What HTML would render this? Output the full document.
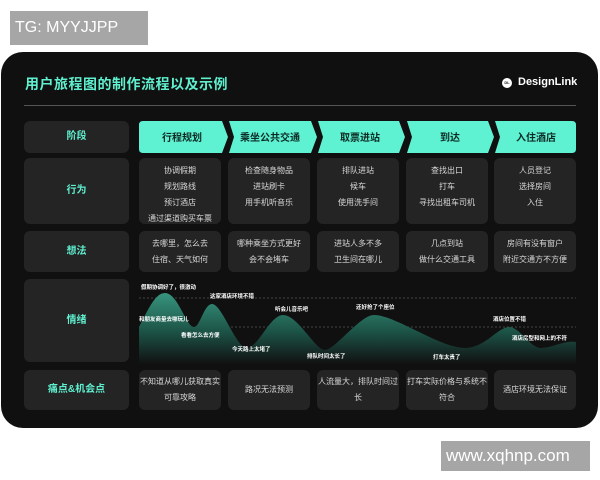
<!DOCTYPE html>
<html><head><meta charset="utf-8"><style>
*{margin:0;padding:0;box-sizing:border-box}
body{width:600px;height:480px;background:#fff;position:relative;overflow:hidden;font-family:"Liberation Sans","Noto Sans CJK SC",sans-serif}
.tag{position:absolute;background:#a6a6a6;color:#fff;font-size:16px;display:flex;align-items:center;padding-left:5px}
.card{position:absolute;left:1px;top:52px;width:597px;height:376px;background:#101010;border-radius:22px}
.t{position:absolute;color:#5ff0cf;font-weight:bold}
.c{position:absolute;background:#242424;border-radius:6px;color:#d8d8d8;font-size:8px;display:flex;flex-direction:column;align-items:center;justify-content:center;text-align:center;line-height:16px}
.h{color:#5ff0cf;font-size:10px;font-weight:bold}
.tp{justify-content:flex-start;padding-top:5px}
svg{position:absolute;left:0;top:0}
.lb{font-size:5.5px;fill:#fff;font-weight:bold;font-family:"Liberation Sans","Noto Sans CJK SC",sans-serif}
</style></head><body>
<div class="tag" style="left:10px;top:11px;width:138px;height:34px">TG: MYYJJPP</div>
<div class="tag" style="left:441px;top:441px;width:149px;height:30px;font-size:17px">www.xqhnp.com</div>
<div class="card"></div>
<div class="t" style="left:25px;top:74px;font-size:14px;letter-spacing:0.5px">用户旅程图的制作流程以及示例</div>
<div style="position:absolute;left:502px;top:78px;width:10px;height:10px;border-radius:50%;background:#fff;color:#111;font-size:4px;font-weight:bold;text-align:center;line-height:10px">DL</div>
<div style="position:absolute;left:518px;top:76px;color:#fff;font-size:11px;font-weight:bold">DesignLink</div>
<div style="position:absolute;left:24px;top:105px;width:552px;height:1px;background:#555"></div>

<div class="c h" style="left:24px;top:121px;width:105px;height:32px">阶段</div>
<div class="c h" style="left:24px;top:158px;width:105px;height:66px">行为</div>
<div class="c h" style="left:24px;top:231px;width:105px;height:41px">想法</div>
<div class="c h" style="left:24px;top:279px;width:105px;height:83px">情绪</div>
<div class="c h" style="left:24px;top:370px;width:105px;height:40px">痛点&amp;机会点</div>

<svg width="600" height="480">
<g fill="#5ef2d2">
<path d="M143 121H222L228 137L222 153H143Q139 153 139 149V125Q139 121 143 121Z"/>
<path d="M229 121H311L317 137L311 153H229L234 137Z"/>
<path d="M318 121H399L405 137L399 153H318L323 137Z"/>
<path d="M407 121H488L494 137L488 153H407L412 137Z"/>
<path d="M495 121H572Q576 121 576 125V149Q576 153 572 153H495L500 137Z"/>
</g>
<g font-size="10" font-weight="bold" fill="#0d2a24" text-anchor="middle" font-family="Liberation Sans,Noto Sans CJK SC,sans-serif">
<text x="182" y="141">行程规划</text><text x="270" y="141">乘坐公共交通</text><text x="360" y="141">取票进站</text><text x="450" y="141">到达</text><text x="536" y="141">入住酒店</text>
</g>
</svg>

<div class="c tp" style="left:139px;top:158px;width:82px;height:66px">协调假期<br>规划路线<br>预订酒店<br>通过渠道购买车票</div>
<div class="c tp" style="left:228px;top:158px;width:82px;height:66px">检查随身物品<br>进站刷卡<br>用手机听音乐</div>
<div class="c tp" style="left:317px;top:158px;width:82px;height:66px">排队进站<br>候车<br>使用洗手间</div>
<div class="c tp" style="left:406px;top:158px;width:82px;height:66px">查找出口<br>打车<br>寻找出租车司机</div>
<div class="c tp" style="left:494px;top:158px;width:82px;height:66px">人员登记<br>选择房间<br>入住</div>

<div class="c" style="left:139px;top:231px;width:82px;height:41px">去哪里，怎么去<br>住宿、天气如何</div>
<div class="c" style="left:228px;top:231px;width:82px;height:41px">哪种乘坐方式更好<br>会不会堵车</div>
<div class="c" style="left:317px;top:231px;width:82px;height:41px">进站人多不多<br>卫生间在哪儿</div>
<div class="c" style="left:406px;top:231px;width:82px;height:41px">几点到站<br>做什么交通工具</div>
<div class="c" style="left:494px;top:231px;width:82px;height:41px">房间有没有窗户<br>附近交通方不方便</div>

<div class="c" style="left:139px;top:370px;width:82px;height:40px">不知道从哪儿获取真实<br>可靠攻略</div>
<div class="c" style="left:228px;top:370px;width:82px;height:40px">路况无法预测</div>
<div class="c" style="left:317px;top:370px;width:82px;height:40px">人流量大，排队时间过<br>长</div>
<div class="c" style="left:406px;top:370px;width:82px;height:40px">打车实际价格与系统不<br>符合</div>
<div class="c" style="left:494px;top:370px;width:82px;height:40px">酒店环境无法保证</div>

<svg width="600" height="480">
<defs><linearGradient id="g" x1="0" y1="0" x2="0" y2="1">
<stop offset="0" stop-color="#37957e"/><stop offset="0.55" stop-color="#1c5246"/><stop offset="1" stop-color="#111"/></linearGradient></defs>
<line x1="139" y1="298" x2="576" y2="298" stroke="#555" stroke-dasharray="2 2" stroke-width="0.7"/>
<line x1="139" y1="327" x2="576" y2="327" stroke="#555" stroke-dasharray="2 2" stroke-width="0.7"/>
<path fill="url(#g)" d="M139 327C148 310 155 293 165 293C178 293 186 327 194 327C200 327 204 304 212 304C222 304 236 348 247 348C258 348 270 315 283 315C298 315 315 350 325 350C335 350 360 315 374 315C395 315 440 348 465 348C485 348 498 327 509 327C520 327 530 348 541 348C552 348 565 340 576 342V364H139Z"/>
<text class="lb" x="141" y="289">假期协调好了，很激动</text>
<text class="lb" x="210" y="298">这家酒店环境不错</text>
<text class="lb" x="139" y="321">和朋友商量去哪玩儿</text>
<text class="lb" x="181" y="337">看看怎么去方便</text>
<text class="lb" x="232" y="351">今天路上太堵了</text>
<text class="lb" x="275" y="311">听会儿音乐吧</text>
<text class="lb" x="356" y="309">还好抢了个座位</text>
<text class="lb" x="307" y="358">排队时间太长了</text>
<text class="lb" x="493" y="321">酒店位置不错</text>
<text class="lb" x="512" y="340">酒店房型和网上的不符</text>
<text class="lb" x="433" y="359">打车太贵了</text>
</svg>
</body></html>
